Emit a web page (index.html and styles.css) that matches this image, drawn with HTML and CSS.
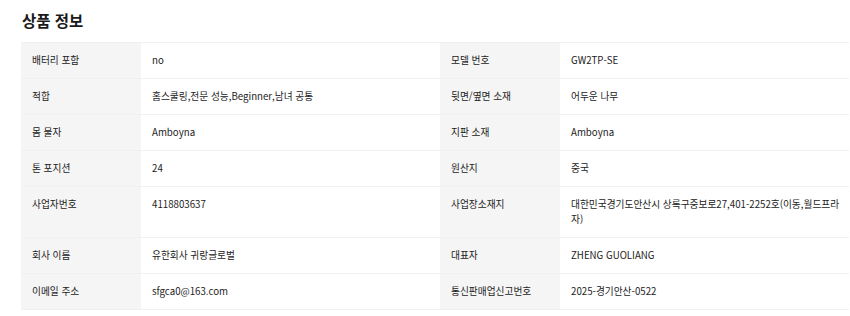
FILE: index.html
```html
<!DOCTYPE html>
<html lang="ko">
<head>
<meta charset="utf-8">
<link rel="stylesheet" href="styles.css">
</head>
<body>
<section class="spec">
  <h2 class="spec-title">상품 정보</h2>
  <table class="spec-table">
    <colgroup>
      <col class="c-label"><col class="c-value"><col class="c-label"><col class="c-value2">
    </colgroup>
    <tbody>
      <tr><th>배터리 포함</th><td>no</td><th>모델 번호</th><td>GW2TP-SE</td></tr>
      <tr><th>적합</th><td>홈스쿨링,전문 성능,Beginner,남녀 공통</td><th>뒷면/옆면 소재</th><td>어두운 나무</td></tr>
      <tr><th>몸 물자</th><td>Amboyna</td><th>지판 소재</th><td>Amboyna</td></tr>
      <tr><th>톤 포지션</th><td>24</td><th>원산지</th><td>중국</td></tr>
      <tr><th>사업자번호</th><td>4118803637</td><th>사업장소재지</th><td>대한민국경기도안산시 상록구중보로27,401-2252호(이동,월드프라자)</td></tr>
      <tr><th>회사 이름</th><td>유한회사 귀랑글로벌</td><th>대표자</th><td>ZHENG GUOLIANG</td></tr>
      <tr><th>이메일 주소</th><td>sfgca0@163.com</td><th>통신판매업신고번호</th><td>2025-경기안산-0522</td></tr>
    </tbody>
  </table>
</section>
</body>
</html>
```
FILE: styles.css
```css
* { box-sizing: border-box; }
html, body { margin: 0; padding: 0; background: #fff; }
body {
  font-family: "Noto Sans CJK KR", "Noto Sans", sans-serif;
  color: #333;
}
.spec { padding: 9px 1px 0 21px; }
.spec-title {
  margin: 0 0 11px 1px;
  font-size: 15.5px;
  line-height: 22px;
  font-weight: 700;
  color: #1a1a1a;
}
.spec-table {
  width: 828px;
  border-collapse: collapse;
  table-layout: fixed;
  font-size: 9.7px;
  line-height: 15px;
}
.c-label { width: 120px; }
.c-value { width: 299px; }
.c-value2 { width: 289px; }
.spec-table th, .spec-table td {
  padding: 10px 4px 10px 11px;
  vertical-align: top;
  text-align: left;
  border-top: 1px solid #f0f0f0;
  border-bottom: 1px solid #f0f0f0;
  font-weight: 400;
  word-break: break-all;
  color: #222;
}
.spec-table th { background: #f5f5f5; }
.spec-table td { background: #fff; }
```
